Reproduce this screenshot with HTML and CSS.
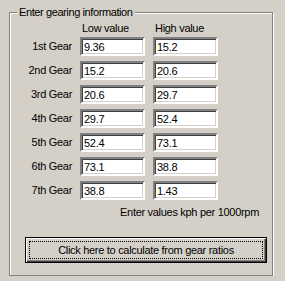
FILE: index.html
```html
<!DOCTYPE html>
<html lang="en">

<head>
    <meta charset="utf-8">
    <title>Gearing</title>
    <link rel="stylesheet" href="styles.css">
</head>

<body>
    <fieldset class="gruppe">
        <legend>Enter gearing information</legend>

        <div class="tabel">
            <div></div>
            <div class="kolonne">Low value</div>
            <div class="kolonne">High value</div>

            <label>1st Gear</label>
            <input type="text" value="9.36">
            <input type="text" value="15.2">

            <label>2nd Gear</label>
            <input type="text" value="15.2">
            <input type="text" value="20.6">

            <label>3rd Gear</label>
            <input type="text" value="20.6">
            <input type="text" value="29.7">

            <label>4th Gear</label>
            <input type="text" value="29.7">
            <input type="text" value="52.4">

            <label>5th Gear</label>
            <input type="text" value="52.4">
            <input type="text" value="73.1">

            <label>6th Gear</label>
            <input type="text" value="73.1">
            <input type="text" value="38.8">

            <label>7th Gear</label>
            <input type="text" value="38.8">
            <input type="text" value="1.43">
        </div>

        <p class="note">Enter values kph per 1000rpm</p>

        <button class="beregn"><span>Click here to calculate from gear ratios</span></button>
    </fieldset>
</body>

</html>
```

FILE: styles.css
```css
* {
    margin: 0;
    padding: 0;
    box-sizing: border-box;
}

body {
    background-color: #d4d0c8;
    font-family: "Liberation Sans", Arial, sans-serif;
    font-size: 11px;
    letter-spacing: -0.3px;
    color: #000000;
    margin: 0;
}

.gruppe {
    margin-left: 9px;
    margin-top: 6px;
    width: 264px;
    height: 270px;
    border: 1px solid #808080;
    box-shadow: 1px 1px 0 #ffffff, inset 1px 1px 0 #ffffff;
    padding-top: 3px;
}

legend {
    margin-left: 7px;
    padding-left: 2px;
    padding-right: 2px;
    line-height: 13px;
    letter-spacing: -0.4px;
    background-color: #d4d0c8;
}

.tabel {
    display: grid;
    grid-template-columns: 62px 65px 65px;
    column-gap: 8px;
    row-gap: 5px;
}

.kolonne {
    padding-left: 2px;
    line-height: 13px;
    margin-bottom: -3px;
}

label {
    text-align: right;
    line-height: 19px;
}

input {
    width: 65px;
    height: 19px;
    font-family: "Liberation Sans", Arial, sans-serif;
    font-size: 11px;
    letter-spacing: -0.3px;
    padding-left: 2px;
    background-color: #ffffff;
    border: 2px solid;
    border-color: #808080 #ffffff #ffffff #808080;
    box-shadow: inset 1px 1px 0 #404040, inset -1px -1px 0 #d4d0c8;
    outline: none;
}

.note {
    text-align: right;
    padding-right: 13px;
    margin-top: 6px;
    line-height: 13px;
}

.beregn {
    display: block;
    margin-top: 18px;
    margin-left: 15px;
    width: 242px;
    height: 26px;
    padding: 3px;
    background-color: #d4d0c8;
    border: 1px solid #000000;
    box-shadow: inset 1px 1px 0 #ffffff, inset -1px -1px 0 #404040, inset -2px -2px 0 #808080;
    font-family: "Liberation Sans", Arial, sans-serif;
    font-size: 11px;
    letter-spacing: -0.3px;
    color: #000000;
}

.beregn span {
    display: block;
    height: 18px;
    line-height: 16px;
    border: 1px dotted #000000;
}
```
